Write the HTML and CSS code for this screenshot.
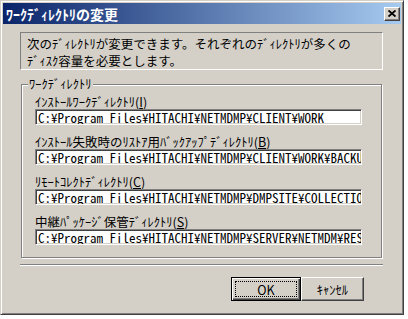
FILE: index.html
```html
<!DOCTYPE html>
<html lang="ja">
<head>
<meta charset="utf-8">
<title>ﾜｰｸﾃﾞｨﾚｸﾄﾘの変更</title>
<link rel="stylesheet" href="styles.css">
</head>
<body>
<div class="window">
  <div class="titlebar">
    <span class="title">ﾜｰｸﾃﾞｨﾚｸﾄﾘの変更</span>
    <button class="close" type="button" aria-label="閉じる">
      <svg width="8" height="7" viewBox="0 0 8 7"><path d="M0.5 0.5 L7.5 6.5 M7.5 0.5 L0.5 6.5" stroke="#000" stroke-width="1.8" fill="none"/></svg>
    </button>
  </div>
  <div class="content">
    <div class="message">次のﾃﾞｨﾚｸﾄﾘが変更できます。それぞれのﾃﾞｨﾚｸﾄﾘが多くの<br>ﾃﾞｨｽｸ容量を必要とします。</div>
    <div class="group">
      <div class="legend">ﾜｰｸﾃﾞｨﾚｸﾄﾘ</div>
      <div class="fields">
        <div class="field">
          <div class="label">ｲﾝｽﾄｰﾙﾜｰｸﾃﾞｨﾚｸﾄﾘ(<u>I</u>)</div>
          <div class="input">C:¥Program Files¥HITACHI¥NETMDMP¥CLIENT¥WORK</div>
        </div>
        <div class="field">
          <div class="label">ｲﾝｽﾄｰﾙ失敗時のﾘｽﾄｱ用ﾊﾞｯｸｱｯﾌﾟﾃﾞｨﾚｸﾄﾘ(<u>B</u>)</div>
          <div class="input">C:¥Program Files¥HITACHI¥NETMDMP¥CLIENT¥WORK¥BACKU</div>
        </div>
        <div class="field">
          <div class="label">ﾘﾓｰﾄｺﾚｸﾄﾃﾞｨﾚｸﾄﾘ(<u>C</u>)</div>
          <div class="input">C:¥Program Files¥HITACHI¥NETMDMP¥DMPSITE¥COLLECTIO</div>
        </div>
        <div class="field">
          <div class="label">中継ﾊﾟｯｹｰｼﾞ保管ﾃﾞｨﾚｸﾄﾘ(<u>S</u>)</div>
          <div class="input">C:¥Program Files¥HITACHI¥NETMDMP¥SERVER¥NETMDM¥RES</div>
        </div>
      </div>
    </div>
    <div class="separator"></div>
    <div class="buttons">
      <button class="btn btn-default" type="button"><span class="focus">OK</span></button>
      <button class="btn btn-cancel" type="button">ｷｬﾝｾﾙ</button>
    </div>
  </div>
</div>
</body>
</html>
```
FILE: styles.css
```css
html, body {
  margin: 0;
  padding: 0;
  background: #ffffff;
}

body {
  font-family: "Noto Sans CJK JP", "Noto Sans", sans-serif;
  font-size: 12.5px;
  color: #000;
}

.window {
  width: 404px;
  height: 315px;
  box-sizing: border-box;
  background: #d4d0c8;
  border: 1px solid;
  border-color: #d4d0c8 #404040 #404040 #d4d0c8;
  box-shadow: inset 1px 1px #ffffff, inset -1px -1px #808080;
  padding: 2px;
  display: flex;
  flex-direction: column;
}

.titlebar {
  height: 21px;
  display: flex;
  align-items: center;
  justify-content: space-between;
  background: linear-gradient(to right, #0a246a, #a6caf0);
  padding: 0 1px 0 3px;
}

.title {
  color: #fff;
  font-weight: bold;
  font-size: 14px;
  line-height: 16px;
}

.close {
  width: 16px;
  height: 14px;
  margin: 0;
  padding: 0;
  background: #d4d0c8;
  border: 1px solid;
  border-color: #ffffff #404040 #404040 #ffffff;
  box-shadow: inset -1px -1px #808080;
  display: flex;
  align-items: center;
  justify-content: center;
}

.close svg {
  display: block;
}

.content {
  padding: 8px 18px 0 17px;
  display: flex;
  flex-direction: column;
}

.message {
  height: 38px;
  box-sizing: border-box;
  border: 1px solid;
  border-color: #808080 #ffffff #ffffff #808080;
  padding: 2px 0 0 6px;
  line-height: 17px;
  white-space: nowrap;
}

.group {
  margin: 14px 1px 0 1px;
  border: 1px solid #808080;
  box-shadow: inset 1px 1px #ffffff, 1px 1px #ffffff;
  padding: 0 0 12px 13px;
}

.legend {
  margin: -8px 0 0 -7px;
  width: fit-content;
  padding: 0 1px;
  background: #d4d0c8;
  line-height: 14px;
  height: 14px;
}

.fields {
  display: flex;
  flex-direction: column;
  gap: 10px;
  margin-top: 4px;
}

.field {
  display: flex;
  flex-direction: column;
}

.label {
  line-height: 14px;
  height: 14px;
  white-space: nowrap;
}

.label u {
  text-underline-offset: 1px;
}

.input {
  width: 327px;
  height: 16px;
  box-sizing: border-box;
  background: #ffffff;
  border: 1px solid;
  border-color: #808080 #ffffff #ffffff #808080;
  box-shadow: inset 1px 1px #404040, inset -1px -1px #d4d0c8;
  padding: 1px 0 0 2px;
  font-family: "Noto Sans CJK JP", monospace;
  font-feature-settings: "hwid" 1;
  font-size: 13px;
  line-height: 13px;
  white-space: nowrap;
  overflow: hidden;
}

.separator {
  margin-top: 6px;
  height: 1px;
  border-top: 1px solid #808080;
  border-bottom: 0;
  background: #ffffff;
}

.buttons {
  margin-top: 11px;
  margin-right: 19px;
  display: flex;
  justify-content: flex-end;
}

.btn {
  height: 24px;
  margin: 0;
  padding: 0;
  background: #d4d0c8;
  font-family: "Noto Sans CJK JP", sans-serif;
  font-size: 12.5px;
  color: #000;
  display: flex;
  align-items: center;
  justify-content: center;
}

.btn-default {
  width: 70px;
  border: 1px solid #000;
  box-shadow: inset 1px 1px #ffffff, inset -1px -1px #404040, inset -2px -2px #808080;
  padding: 3px;
}

.focus {
  flex: 1;
  align-self: stretch;
  display: flex;
  align-items: center;
  justify-content: center;
  border: 1px dotted #000;
}

.btn-cancel {
  width: 63px;
  border: 1px solid;
  border-color: #ffffff #404040 #404040 #ffffff;
  box-shadow: inset -1px -1px #808080;
}
```
